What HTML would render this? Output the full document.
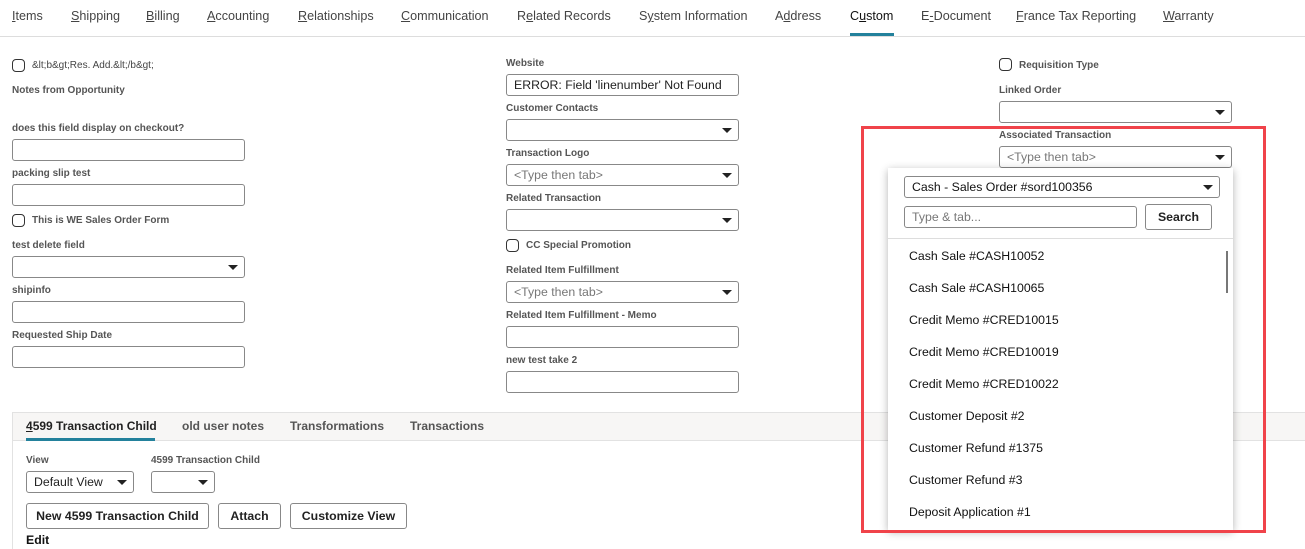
<!DOCTYPE html>
<html><head><style>
*{box-sizing:border-box;margin:0;padding:0}
body{width:1305px;height:549px;overflow:hidden;background:#fff;font-family:"Liberation Sans",sans-serif;position:relative;color:#333}
.a{position:absolute;white-space:nowrap}
.tab{font-size:12.6px;color:#444;top:9px}
.lbl{font-size:10px;font-weight:bold;color:#555}
.inp{position:absolute;height:22px;border:1px solid #888;border-radius:3px;background:#fff;font-size:12.3px;padding:3px 7px;color:#222;white-space:nowrap;overflow:hidden}
.ph{color:#777}
.arr{position:absolute;right:6px;top:8px;width:0;height:0;border-left:5px solid transparent;border-right:5px solid transparent;border-top:5px solid #222}
.cb{position:absolute;width:13px;height:13px;border:1.5px solid #333;border-radius:4px}
.btn{position:absolute;height:26px;border:1px solid #888;border-radius:3px;background:#fff;font-size:12.3px;font-weight:bold;color:#222;text-align:center;line-height:24px}
.it{position:absolute;left:909px;font-size:12.3px;color:#111}
.bt{position:absolute;top:419px;font-size:12px;font-weight:bold;color:#555;white-space:nowrap}
</style></head><body>
<div class="a tab" style="left:12px"><u>I</u>tems</div>
<div class="a tab" style="left:71px"><u>S</u>hipping</div>
<div class="a tab" style="left:146px"><u>B</u>illing</div>
<div class="a tab" style="left:207px"><u>A</u>ccounting</div>
<div class="a tab" style="left:298px"><u>R</u>elationships</div>
<div class="a tab" style="left:401px"><u>C</u>ommunication</div>
<div class="a tab" style="left:517px">R<u>e</u>lated Records</div>
<div class="a tab" style="left:639px">S<u>y</u>stem Information</div>
<div class="a tab" style="left:775px">A<u>d</u>dress</div>
<div class="a tab" style="left:850px;color:#111">C<u>u</u>stom</div>
<div class="a tab" style="left:921px">E<u>-</u>Document</div>
<div class="a tab" style="left:1016px"><u>F</u>rance Tax Reporting</div>
<div class="a tab" style="left:1163px"><u>W</u>arranty</div>
<div class="a" style="left:0;top:36px;width:1305px;height:1px;background:#ddd"></div>
<div class="a" style="left:850px;top:33px;width:44px;height:3px;background:#23819c"></div>

<div class="cb" style="left:12px;top:59px"></div>
<div class="a lbl" style="left:32px;top:60px;font-weight:normal;color:#444">&amp;lt;b&amp;gt;Res. Add.&amp;lt;/b&amp;gt;</div>
<div class="a lbl" style="left:12px;top:85px">Notes from Opportunity</div>
<div class="a lbl" style="left:12px;top:123px">does this field display on checkout?</div>
<div class="inp" style="left:12px;top:139px;width:233px"></div>
<div class="a lbl" style="left:12px;top:168px">packing slip test</div>
<div class="inp" style="left:12px;top:184px;width:233px"></div>
<div class="cb" style="left:12px;top:214px"></div>
<div class="a lbl" style="left:32px;top:215px">This is WE Sales Order Form</div>
<div class="a lbl" style="left:12px;top:240px">test delete field</div>
<div class="inp" style="left:12px;top:256px;width:233px"><div class="arr"></div></div>
<div class="a lbl" style="left:12px;top:285px">shipinfo</div>
<div class="inp" style="left:12px;top:301px;width:233px"></div>
<div class="a lbl" style="left:12px;top:330px">Requested Ship Date</div>
<div class="inp" style="left:12px;top:346px;width:233px"></div>

<div class="a lbl" style="left:506px;top:58px">Website</div>
<div class="inp" style="left:506px;top:74px;width:233px">ERROR: Field 'linenumber' Not Found</div>
<div class="a lbl" style="left:506px;top:103px">Customer Contacts</div>
<div class="inp" style="left:506px;top:119px;width:233px"><div class="arr"></div></div>
<div class="a lbl" style="left:506px;top:148px">Transaction Logo</div>
<div class="inp ph" style="left:506px;top:164px;width:233px">&lt;Type then tab&gt;<div class="arr"></div></div>
<div class="a lbl" style="left:506px;top:193px">Related Transaction</div>
<div class="inp" style="left:506px;top:209px;width:233px"><div class="arr"></div></div>
<div class="cb" style="left:506px;top:239px"></div>
<div class="a lbl" style="left:526px;top:240px">CC Special Promotion</div>
<div class="a lbl" style="left:506px;top:265px">Related Item Fulfillment</div>
<div class="inp ph" style="left:506px;top:281px;width:233px">&lt;Type then tab&gt;<div class="arr"></div></div>
<div class="a lbl" style="left:506px;top:310px">Related Item Fulfillment - Memo</div>
<div class="inp" style="left:506px;top:326px;width:233px"></div>
<div class="a lbl" style="left:506px;top:355px">new test take 2</div>
<div class="inp" style="left:506px;top:371px;width:233px"></div>

<div class="cb" style="left:999px;top:58px"></div>
<div class="a lbl" style="left:1019px;top:60px">Requisition Type</div>
<div class="a lbl" style="left:999px;top:85px">Linked Order</div>
<div class="inp" style="left:999px;top:101px;width:233px"><div class="arr"></div></div>
<div class="a lbl" style="left:999px;top:130px">Associated Transaction</div>
<div class="inp ph" style="left:999px;top:146px;width:233px">&lt;Type then tab&gt;<div class="arr"></div></div>

<div class="a" style="left:12px;top:412px;width:1300px;height:29px;background:#f7f6f5;border:1px solid #e2e2e2;border-right:none"></div>
<div class="bt" style="left:26px;color:#222"><u>4</u>599 Transaction Child</div>
<div class="a" style="left:26px;top:438px;width:129px;height:3px;background:#23819c"></div>
<div class="bt" style="left:182px">old user notes</div>
<div class="bt" style="left:290px">Transformations</div>
<div class="bt" style="left:410px">Transactions</div>
<div class="a" style="left:12px;top:441px;width:1px;height:108px;background:#e2e2e2"></div>
<div class="a lbl" style="left:26px;top:455px">View</div>
<div class="a lbl" style="left:151px;top:455px">4599 Transaction Child</div>
<div class="inp" style="left:26px;top:471px;width:108px">Default View<div class="arr"></div></div>
<div class="inp" style="left:151px;top:471px;width:64px"><div class="arr"></div></div>
<div class="btn" style="left:26px;top:503px;width:183px">New 4599 Transaction Child</div>
<div class="btn" style="left:218px;top:503px;width:63px">Attach</div>
<div class="btn" style="left:290px;top:503px;width:117px">Customize View</div>
<div class="a" style="left:26px;top:533px;font-size:12.3px;font-weight:bold;color:#111">Edit</div>

<div class="a" style="left:888px;top:168px;width:345px;height:362px;background:#fff;box-shadow:0 2px 8px rgba(0,0,0,.3)"></div>
<div class="inp" style="left:904px;top:176px;width:316px;color:#111">Cash - Sales Order #sord100356<div class="arr"></div></div>
<div class="inp ph" style="left:904px;top:206px;width:233px">Type &amp; tab...</div>
<div class="btn" style="left:1145px;top:204px;width:67px">Search</div>
<div class="a" style="left:888px;top:238px;width:345px;height:1px;background:#ddd"></div>
<div class="a" style="left:1226px;top:251px;width:2px;height:42px;background:#777"></div>
<div class="it" style="top:249px">Cash Sale #CASH10052</div>
<div class="it" style="top:281px">Cash Sale #CASH10065</div>
<div class="it" style="top:313px">Credit Memo #CRED10015</div>
<div class="it" style="top:345px">Credit Memo #CRED10019</div>
<div class="it" style="top:377px">Credit Memo #CRED10022</div>
<div class="it" style="top:409px">Customer Deposit #2</div>
<div class="it" style="top:441px">Customer Refund #1375</div>
<div class="it" style="top:473px">Customer Refund #3</div>
<div class="it" style="top:505px">Deposit Application #1</div>

<div class="a" style="left:861px;top:126px;width:405px;height:407px;border:3px solid #f0434a"></div>
</body></html>
